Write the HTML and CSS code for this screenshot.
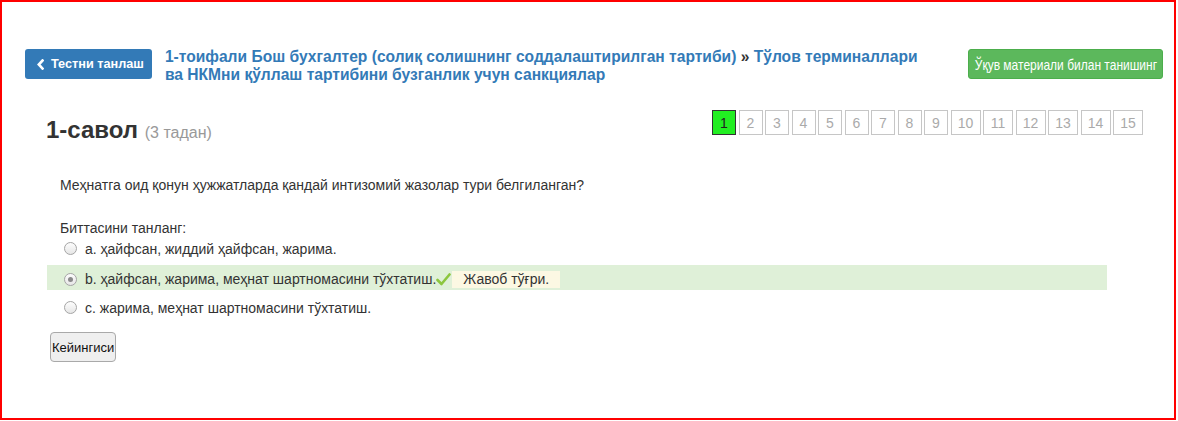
FILE: index.html
```html
<!DOCTYPE html>
<html lang="uz">
<head>
<meta charset="utf-8">
<title>1-савол</title>
<link rel="stylesheet" href="styles.css">
</head>
<body>
<div class="frame">
  <div class="header">
    <a class="btn-back" href="#">
      <svg class="chev" width="7" height="11" viewBox="0 0 7 11"><polyline points="5.5,1.5 1.8,5.5 5.5,9.5" fill="none" stroke="#fff" stroke-width="2.6" stroke-linecap="square"/></svg>
      <span>Тестни танлаш</span>
    </a>
    <div class="title">1-тоифали Бош бухгалтер (солиқ солишнинг соддалаштирилган тартиби) <span class="sep">»</span> Тўлов терминаллари ва НКМни қўллаш тартибини бузганлик учун санкциялар</div>
    <a class="btn-study" href="#"><span class="narrow">Ўқув материали билан танишинг</span></a>
  </div>

  <div class="qhead">
    <h2 class="qtitle">1-савол <small>(3 тадан)</small></h2>
    <div class="pager">
      <span class="pg active">1</span>
      <span class="pg">2</span>
      <span class="pg">3</span>
      <span class="pg">4</span>
      <span class="pg">5</span>
      <span class="pg">6</span>
      <span class="pg">7</span>
      <span class="pg">8</span>
      <span class="pg">9</span>
      <span class="pg wide">10</span>
      <span class="pg wide">11</span>
      <span class="pg wide">12</span>
      <span class="pg wide">13</span>
      <span class="pg wide">14</span>
      <span class="pg wide">15</span>
    </div>
  </div>

  <div class="question">Меҳнатга оид қонун ҳужжатларда қандай интизомий жазолар тури белгиланган?</div>
  <div class="prompt">Биттасини танланг:</div>

  <div class="options">
    <div class="opt"><span class="radio"></span><span>a. ҳайфсан, жиддий ҳайфсан, жарима.</span></div>
    <div class="opt correct"><span class="radio checked"></span><span>b. ҳайфсан, жарима, меҳнат шартномасини тўхтатиш.</span>
      <svg class="tick" width="15" height="13" viewBox="0 0 15 13"><polyline points="1.5,7 5.5,11 13.5,1.5" fill="none" stroke="#8cc63e" stroke-width="2.6" stroke-linejoin="round" stroke-linecap="round"/></svg>
      <span class="feedback">Жавоб тўғри.</span>
    </div>
    <div class="opt"><span class="radio"></span><span>c. жарима, меҳнат шартномасини тўхтатиш.</span></div>
  </div>

  <button class="btn-next" type="button">Кейингиси</button>
</div>
</body>
</html>
```

FILE: styles.css
```css
html, body {
  margin: 0;
  padding: 0;
  background: #fff;
}

body {
  font-family: "Liberation Sans", Arial, sans-serif;
  color: #333;
}

.frame {
  box-sizing: border-box;
  width: 1176px;
  height: 420px;
  border: 2px solid #f00;
  overflow: hidden;
}

.header {
  display: flex;
  align-items: flex-start;
  padding: 47px 11px 0 23px;
}

.btn-back {
  display: flex;
  align-items: center;
  flex: none;
  box-sizing: border-box;
  height: 30px;
  padding: 0 8px 0 12px;
  background: #337ab7;
  border-radius: 3px;
  color: #fff;
  font-weight: bold;
  font-size: 12.7px;
  text-decoration: none;
}

.chev {
  margin-right: 7px;
}

.title {
  margin: -1px 0 0 13px;
  width: 765px;
  color: #337ab7;
  font-weight: bold;
  font-size: 15.6px;
  line-height: 18px;
}

.sep {
  color: #333;
}

.btn-study {
  margin-left: auto;
  flex: none;
  box-sizing: border-box;
  height: 30px;
  width: 195px;
  display: flex;
  align-items: center;
  justify-content: center;
  background: #5cb85c;
  border: 1px solid #4cae4c;
  border-radius: 3px;
  color: #fff;
  font-size: 15px;
  text-decoration: none;
  white-space: nowrap;
  overflow: hidden;
}

.narrow {
  display: inline-block;
  transform: scaleX(0.8);
  transform-origin: center;
}

.qhead {
  display: flex;
  justify-content: space-between;
  align-items: flex-start;
  margin-top: 26px;
  padding: 0 31px 0 44px;
}

.qtitle {
  margin: 6px 0 0;
  font-size: 24px;
  line-height: 28px;
  font-weight: bold;
  color: #333;
}

.qtitle small {
  font-size: 16px;
  font-weight: normal;
  color: #999;
}

.pager {
  display: flex;
  gap: 2.5px;
}

.pg {
  box-sizing: border-box;
  width: 24px;
  height: 25px;
  display: flex;
  align-items: center;
  justify-content: center;
  border: 1px solid #c6c6c6;
  color: #aaa;
  font-size: 14px;
}

.pg.wide {
  width: 30px;
}

.pg.active {
  background: #22ee22;
  border-color: #333;
  color: #222;
}

.question {
  margin: 28px 0 0 58px;
  font-size: 14px;
  line-height: 20px;
}

.prompt {
  margin: 25px 0 0 58px;
  font-size: 14px;
  line-height: 16px;
}

.options {
  margin: 0 67px 0 45px;
}

.opt {
  display: flex;
  align-items: center;
  height: 25px;
  padding-left: 17px;
  font-size: 14px;
  margin-bottom: 4px;
}

.opt.correct {
  background: #dff0d8;
  padding-top: 3px;
  box-sizing: border-box;
  margin-bottom: 5px;
}

.radio {
  box-sizing: border-box;
  width: 13px;
  height: 13px;
  border-radius: 50%;
  border: 1px solid #a5a5a5;
  background: linear-gradient(#fdfdfd, #e6e6e6);
  margin-right: 8px;
  flex: none;
  display: flex;
  align-items: center;
  justify-content: center;
}

.radio.checked::after {
  content: "";
  width: 5px;
  height: 5px;
  border-radius: 50%;
  background: #8a8a8a;
}

.tick {
  margin: 0 1px 0 0;
}

.feedback {
  background: #fcf8e3;
  padding: 0 11px 0 11px;
  line-height: 17px;
}

.btn-next {
  display: block;
  margin: 12px 0 0 48px;
  box-sizing: border-box;
  height: 30px;
  padding: 0 1px;
  background: #efefef;
  border: 1px solid #a9a9a9;
  border-radius: 4px;
  color: #111;
  font-family: "Liberation Sans", Arial, sans-serif;
  font-size: 13px;
}
```
